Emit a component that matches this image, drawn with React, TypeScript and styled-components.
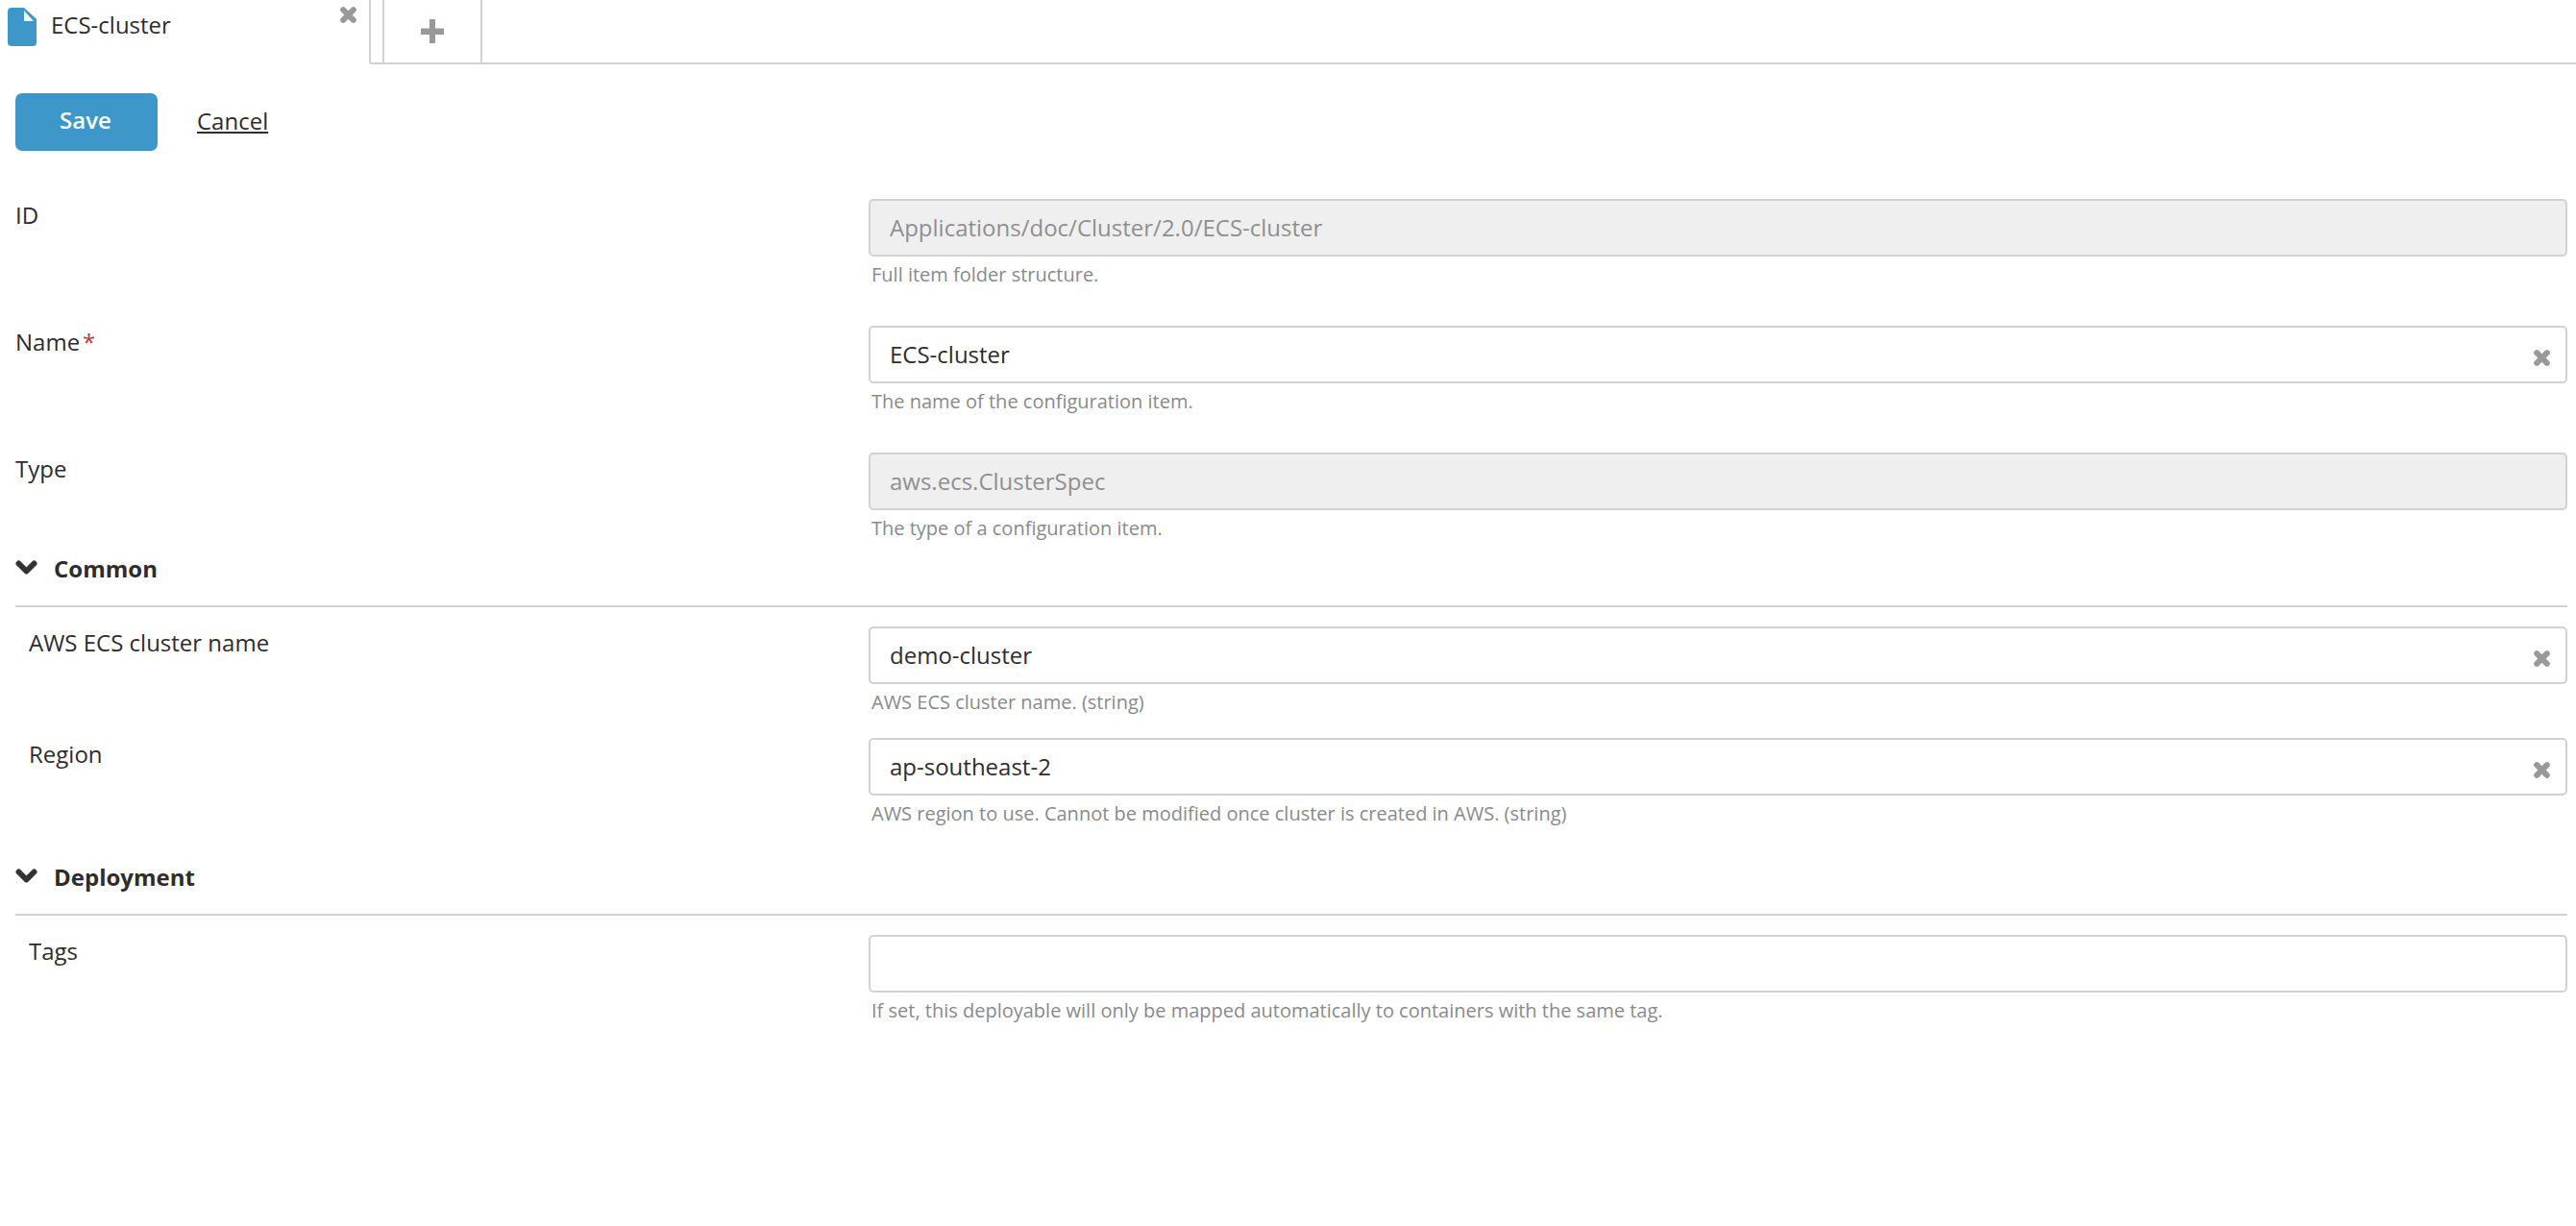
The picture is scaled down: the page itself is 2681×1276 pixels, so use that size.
import React from 'react'
import styled, { createGlobalStyle } from 'styled-components'

const GlobalStyle = createGlobalStyle`
  html, body {
    margin: 0;
    padding: 0;
    background: #fff;
    color: #2f2c2b;
    font-family: "Open Sans", "Liberation Sans", sans-serif;
  }
`

const Page = styled.div`
  width: 2681px;
  min-height: 1276px;
  overflow: hidden;
`

const TabBar = styled.div`
  display: flex;
  height: 67px;
  box-sizing: border-box;
`

const ActiveTab = styled.div`
  width: 384px;
  display: flex;
  align-items: flex-start;
  padding: 8px 13px 0 8px;
  box-sizing: border-box;
`

const TabTitle = styled.span`
  margin: 3px 0 0 15px;
  font-size: 24px;
  line-height: 30px;
  flex: 1;
`

const TabClose = styled.span`
  margin-top: -1px;
  display: flex;
`

const Spacer = styled.div`
  width: 14px;
  border-left: 2px solid #d2d2d2;
  border-bottom: 2px solid #d2d2d2;
  border-bottom-left-radius: 3px;
  box-sizing: border-box;
`

const AddTab = styled.div`
  width: 104px;
  display: flex;
  align-items: center;
  justify-content: center;
  border-left: 2px solid #d2d2d2;
  border-right: 2px solid #d2d2d2;
  border-bottom: 2px solid #d2d2d2;
  box-sizing: border-box;
`

const TabFill = styled.div`
  flex: 1;
  border-bottom: 2px solid #d2d2d2;
`

const Content = styled.div`
  padding: 30px 9px 0 16px;
`

const Actions = styled.div`
  display: flex;
  align-items: center;
  gap: 41px;
  margin-bottom: 50px;
`

const SaveButton = styled.button`
  width: 148px;
  height: 60px;
  padding: 0 2px 5px 0;
  border: 0;
  border-radius: 7px;
  background: #3d97c9;
  color: #fff;
  font-family: inherit;
  font-size: 24px;
  font-weight: 600;
`

const CancelLink = styled.a`
  color: #2f2c2b;
  font-size: 24px;
  line-height: 30px;
  margin-bottom: 3px;
  text-decoration: underline;
`

const Row = styled.div<{ $indent?: boolean; $gap: number }>`
  display: grid;
  grid-template-columns: ${p => (p.$indent ? '874px' : '888px')} 1fr;
  padding-left: ${p => (p.$indent ? '14px' : '0')};
  margin-bottom: ${p => p.$gap}px;
`

const Label = styled.label`
  font-size: 24px;
  line-height: 30px;
  margin-top: 2px;
`

const Required = styled.span`
  color: #c0392b;
  margin-left: 3px;
`

const FieldBox = styled.div`
  position: relative;
`

const Input = styled.input`
  display: block;
  width: 100%;
  height: 60px;
  box-sizing: border-box;
  padding: 0 20px 1px;
  border: 2px solid #d2d2d2;
  border-radius: 5px;
  background: ${p => (p.disabled ? '#efefef' : '#fff')};
  color: ${p => (p.disabled ? '#8f8f8f' : '#2f2c2b')};
  -webkit-text-fill-color: ${p => (p.disabled ? '#8f8f8f' : '#2f2c2b')};
  opacity: 1;
  font-family: inherit;
  font-size: 24px;
  outline: none;
`

const ClearIcon = styled.span`
  position: absolute;
  right: 18px;
  top: 25px;
  display: flex;
`

const Help = styled.div`
  margin: 7px 0 0 3px;
  font-size: 20px;
  line-height: 24px;
  color: #8a8a8a;
`

const SectionHead = styled.div`
  display: flex;
  align-items: center;
  gap: 17px;
  height: 46px;
  border-bottom: 2px solid #d2d2d2;
  padding-bottom: 16px;
  margin-bottom: 20px;
  box-sizing: content-box;
`

const SectionTitle = styled.span`
  font-size: 24px;
  font-weight: 700;
`

const Cross = ({ size = 17 }: { size?: number }) => (
  <svg width={size} height={size} viewBox="0 0 17 17">
    <path d="M3.200 3.200 13.800 13.800M13.800 3.200 3.200 13.800" stroke="#999" strokeWidth="6" strokeLinecap="round" fill="none" />
  </svg>
)

const Chevron = () => (
  <svg width="23" height="16" viewBox="0 0 23 16">
    <path d="M3.500 3.500 11.500 11.500 19.500 3.500" stroke="#333" strokeWidth="6" strokeLinecap="round" strokeLinejoin="round" fill="none" />
  </svg>
)

const FileIcon = () => (
  <svg width="30" height="40" viewBox="0 0 30 40">
    <path d="M4 0H17L30 12V36a4 4 0 0 1-4 4H4a4 4 0 0 1-4-4V4a4 4 0 0 1 4-4Z" fill="#3d97c9" />
    <path d="M17 3 27 14H17Z" fill="#fff" />
  </svg>
)

const Plus = () => (
  <svg width="24" height="25" viewBox="0 0 24 25">
    <path d="M9 0h6v9.500h9v6.500h-9V25H9v-9H0V9.500h9Z" fill="#999" />
  </svg>
)

type FieldProps = {
  label: string
  value?: string
  help: string
  gap: number
  required?: boolean
  disabled?: boolean
  clear?: boolean
  indent?: boolean
}

const Field = ({ label, value = '', help, gap, required, disabled, clear, indent }: FieldProps) => (
  <Row $indent={indent} $gap={gap}>
    <Label>
      {label}
      {required && <Required>*</Required>}
    </Label>
    <div>
      <FieldBox>
        <Input value={value} readOnly disabled={disabled} />
        {clear && (
          <ClearIcon>
            <Cross />
          </ClearIcon>
        )}
      </FieldBox>
      <Help>{help}</Help>
    </div>
  </Row>
)

export default function App() {
  return (
    <Page>
      <GlobalStyle />
      <TabBar>
        <ActiveTab>
          <FileIcon />
          <TabTitle>ECS-cluster</TabTitle>
          <TabClose>
            <Cross />
          </TabClose>
        </ActiveTab>
        <Spacer />
        <AddTab>
          <Plus />
        </AddTab>
        <TabFill />
      </TabBar>
      <Content>
        <Actions>
          <SaveButton>Save</SaveButton>
          <CancelLink>Cancel</CancelLink>
        </Actions>
        <Field label="ID" value="Applications/doc/Cluster/2.0/ECS-cluster" help="Full item folder structure." disabled gap={41} />
        <Field label="Name" value="ECS-cluster" help="The name of the configuration item." required clear gap={41} />
        <Field label="Type" value="aws.ecs.ClusterSpec" help="The type of a configuration item." disabled gap={6} />
        <SectionHead>
          <Chevron />
          <SectionTitle>Common</SectionTitle>
        </SectionHead>
        <Field indent label="AWS ECS cluster name" value="demo-cluster" help="AWS ECS cluster name. (string)" clear gap={25} />
        <Field indent label="Region" value="ap-southeast-2" help="AWS region to use. Cannot be modified once cluster is created in AWS. (string)" clear gap={30} />
        <SectionHead>
          <Chevron />
          <SectionTitle>Deployment</SectionTitle>
        </SectionHead>
        <Field indent label="Tags" help="If set, this deployable will only be mapped automatically to containers with the same tag." gap={0} />
      </Content>
    </Page>
  )
}
